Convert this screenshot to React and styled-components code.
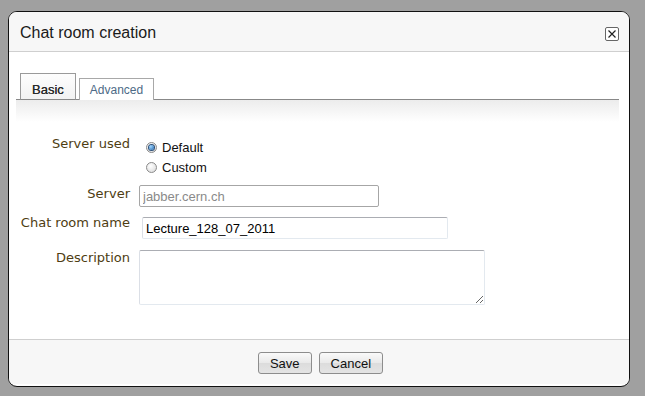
import React from "react";
import styled, { createGlobalStyle } from "styled-components";

const Global = createGlobalStyle`
  html, body {
    margin: 0;
    padding: 0;
    background: #a0a0a0;
  }
  body {
    font-family: "Liberation Sans", Arial, sans-serif;
  }
`;

const Dialog = styled.div`
  margin: 11px 0 0 8px;
  width: 620px;
  height: 374px;
  border: 1px solid #111;
  border-radius: 9px;
  background: #fff;
  overflow: hidden;
  display: flex;
  flex-direction: column;
`;

const Header = styled.div`
  height: 40px;
  box-sizing: border-box;
  padding: 11px 10px 0 11px;
  background: #f7f7f7;
  border-bottom: 1px solid #cfcfcf;
  display: flex;
  justify-content: space-between;
  align-items: flex-start;
`;

const Title = styled.h1`
  margin: 0;
  font-size: 16px;
  line-height: 20px;
  font-weight: normal;
  color: #1a1a1a;
`;

const CloseBox = styled.button`
  margin-top: 4px;
  width: 14px;
  height: 14px;
  padding: 0;
  box-sizing: border-box;
  border: 1px solid #666;
  border-radius: 2px;
  background: #fff;
  display: flex;
  align-items: center;
  justify-content: center;
`;

const Body = styled.div`
  height: 287px;
  padding-top: 21px;
  box-sizing: border-box;
`;

const TabStrip = styled.div`
  margin: 0 10px 0 7px;
  padding-left: 4px;
  height: 26px;
  border-bottom: 1px solid #888;
  display: flex;
  align-items: flex-end;
  gap: 3px;
`;

const Tab = styled.div`
  box-sizing: border-box;
  height: ${(p) => (p.$active ? "27px" : "22px")};
  margin-bottom: -1px;
  padding: 0 ${(p) => (p.$active ? "11px" : "10px")};
  border: 1px solid ${(p) => (p.$active ? "#9a9a9a" : "#a8a8a8")};
  border-bottom: ${(p) => (p.$active ? "1px solid #888" : "none")};
  background: ${(p) =>
    p.$active ? "linear-gradient(#fdfdfd, #f2f2f2)" : "#fff"};
  font-size: ${(p) => (p.$active ? "13px" : "12px")};
  line-height: ${(p) => (p.$active ? "32px" : "22px")};
  color: ${(p) => (p.$active ? "#2a2a2a" : "#4d6a86")};
  text-shadow: ${(p) => (p.$active ? "0 0 0.3px #333" : "none")};
`;

const Shade = styled.div`
  margin: 0 10px 0 7px;
  height: 22px;
  background: linear-gradient(#ececec, #fff);
`;

const Form = styled.div`
  margin-top: 12px;
  display: flex;
  flex-direction: column;
`;

const Row = styled.div`
  display: flex;
  align-items: flex-start;
  margin-top: ${(p) => p.$top || 0}px;
`;

const Label = styled.label`
  width: 121px;
  margin-top: ${(p) => p.$shift || 0}px;
  margin-right: 9px;
  text-align: right;
  font-family: "DejaVu Sans", Verdana, sans-serif;
  font-size: 13px;
  line-height: 16px;
  color: #4e3d12;
  flex-shrink: 0;
`;

const Radios = styled.div`
  margin-top: 3px;
  padding-left: 7px;
  display: flex;
  flex-direction: column;
`;

const RadioLine = styled.div`
  display: flex;
  align-items: center;
  height: 20px;
  font-size: 13px;
  color: #111;
`;

const RadioDot = styled.span`
  width: 11px;
  height: 11px;
  box-sizing: border-box;
  border-radius: 50%;
  border: 1px solid #8a8a8a;
  background: radial-gradient(circle at 40% 35%, #fff, #d6d6d6);
  margin-right: 5px;
  margin-top: 1px;
  display: flex;
  align-items: center;
  justify-content: center;

  &::after {
    content: "";
    display: ${(p) => (p.$checked ? "block" : "none")};
    width: 5px;
    height: 5px;
    border-radius: 50%;
    background: radial-gradient(circle at 35% 35%, #9fd6ff, #1a5fa8);
    box-shadow: 0 0 0 1px #2b4f78;
  }
`;

const TextInput = styled.input`
  box-sizing: border-box;
  width: ${(p) => p.$w}px;
  height: 22px;
  margin-left: ${(p) => p.$offset || 0}px;
  padding: 0 3px;
  border: 1px solid;
  border-color: ${(p) =>
    p.$muted ? "#a6a6a6" : "#abadb3 #e3e9ef #e3e9ef #dbdfe6"};
  border-radius: 2px;
  font-family: "Liberation Sans", Arial, sans-serif;
  font-size: 13px;
  color: ${(p) => (p.$muted ? "#8a8a8a" : "#000")};
  background: #fff;
  outline: none;
`;

const TextArea = styled.textarea`
  box-sizing: border-box;
  width: 346px;
  height: 55px;
  margin: 0;
  padding: 3px;
  border: 1px solid;
  border-color: #abadb3 #e3e9ef #e3e9ef #dbdfe6;
  border-radius: 2px;
  font-family: "Liberation Sans", Arial, sans-serif;
  font-size: 13px;
  outline: none;
`;

const Footer = styled.div`
  height: 45px;
  box-sizing: border-box;
  padding: 12px 0 0 3px;
  border-top: 1px solid #cfcfcf;
  background: #f7f7f7;
  display: flex;
  justify-content: center;
  align-items: flex-start;
  gap: 7px;
`;

const Button = styled.button`
  height: 22px;
  padding: 0 11px;
  border: 1px solid #8d8d8d;
  border-radius: 3px;
  background: linear-gradient(#fafafa, #e9e9e9 50%, #dcdcdc 51%, #e4e4e4);
  font-family: "Liberation Sans", Arial, sans-serif;
  font-size: 13px;
  color: #111;
`;

export default function App() {
  return (
    <>
      <Global />
      <Dialog>
        <Header>
          <Title>Chat room creation</Title>
          <CloseBox aria-label="close">
            <svg width="8" height="8" viewBox="0 0 8 8">
              <path d="M0.5 0.5 L7.5 7.5 M7.5 0.5 L0.5 7.5" stroke="#222" strokeWidth="1.2" />
            </svg>
          </CloseBox>
        </Header>
        <Body>
          <TabStrip>
            <Tab $active>Basic</Tab>
            <Tab>Advanced</Tab>
          </TabStrip>
          <Shade />
          <Form>
            <Row>
              <Label $shift={2}>Server used</Label>
              <Radios>
                <RadioLine>
                  <RadioDot $checked />
                  Default
                </RadioLine>
                <RadioLine>
                  <RadioDot />
                  Custom
                </RadioLine>
              </Radios>
            </Row>
            <Row $top={8}>
              <Label $shift={1}>Server</Label>
              <TextInput $w={240} $muted defaultValue="jabber.cern.ch" />
            </Row>
            <Row $top={10}>
              <Label $shift={-2}>Chat room name</Label>
              <TextInput $w={306} $offset={3} defaultValue="Lecture_128_07_2011" />
            </Row>
            <Row $top={11}>
              <Label $shift={0}>Description</Label>
              <TextArea />
            </Row>
          </Form>
        </Body>
        <Footer>
          <Button>Save</Button>
          <Button>Cancel</Button>
        </Footer>
      </Dialog>
    </>
  );
}
